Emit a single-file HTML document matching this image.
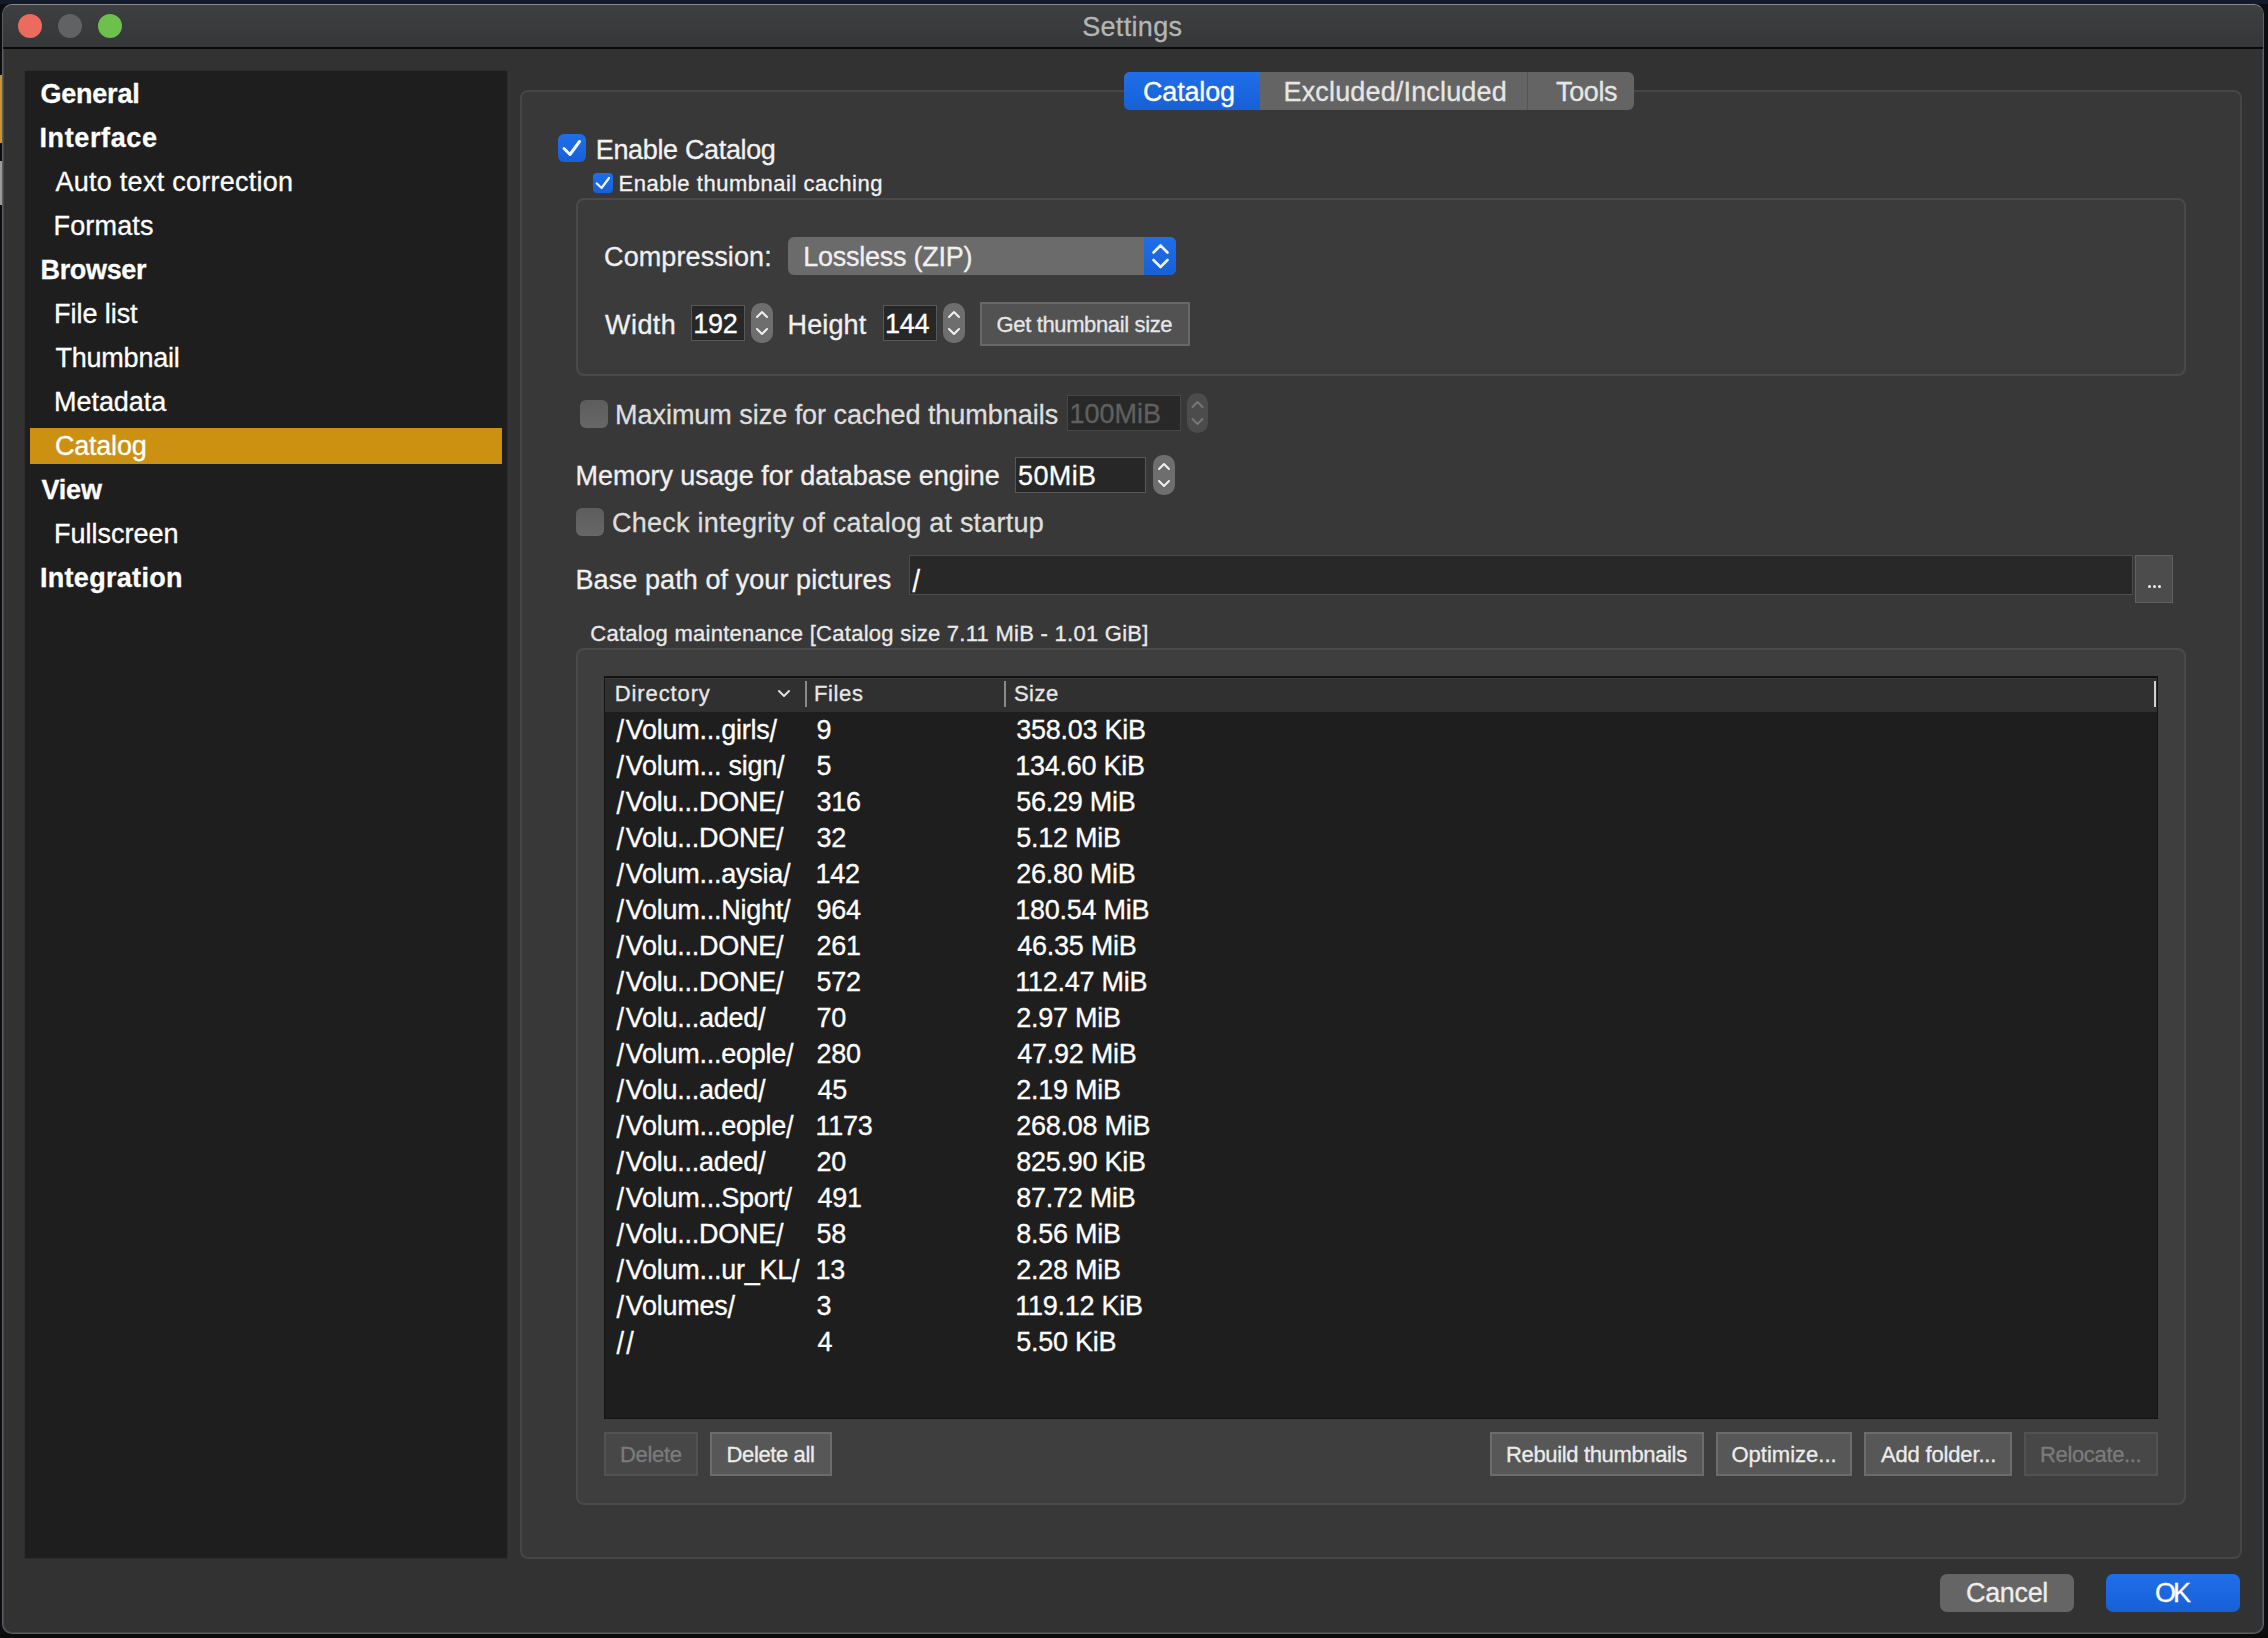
<!DOCTYPE html>
<html><head><meta charset="utf-8"><title>Settings</title>
<style>
html,body{margin:0;padding:0;width:2268px;height:1638px;overflow:hidden;background:#0b0d12;}
body{position:relative;font-family:"Liberation Sans",sans-serif;}
.a{position:absolute;box-sizing:border-box;}
.sl{display:inline-block;transform:translateY(2px) scaleY(1.15)}.sl1{margin-right:2px}
.t{position:absolute;white-space:nowrap;font-family:"Liberation Sans",sans-serif;}
</style></head><body>
<!-- desktop -->
<div class="a" style="left:0;top:0;width:2268px;height:4px;background:#131a2b"></div>
<div class="a" style="left:0;top:1634px;width:2268px;height:4px;background:#0a0a0a"></div>
<div class="a" style="left:0;top:75px;width:1.5px;height:68px;background:#c8962a"></div>
<div class="a" style="left:0;top:161px;width:1.5px;height:44px;background:#9a9a9a"></div>
<!-- window -->
<div class="a" style="left:2px;top:4px;width:2262px;height:1630px;border-radius:10px;background:#323232;border:1px solid #5f5f5f;border-top-color:#8c8c8c;box-shadow:inset 1px 0 0 #474747,inset -1px 0 0 #474747,inset 0 -1px 0 #474747;overflow:hidden">
  <div class="a" style="left:0;top:0;width:100%;height:42px;background:linear-gradient(#3e3f41,#363739)"></div>
  <div class="a" style="left:0;top:42px;width:100%;height:1.5px;background:#0a0a0a"></div>
</div>
<!-- traffic lights -->
<div class="a" style="left:18px;top:14px;width:24px;height:24px;border-radius:50%;background:#ed6a5e"></div>
<div class="a" style="left:58px;top:14px;width:24px;height:24px;border-radius:50%;background:#616264"></div>
<div class="a" style="left:98px;top:14px;width:24px;height:24px;border-radius:50%;background:#6dc04b"></div>
<!-- sidebar -->
<div class="a" style="left:24px;top:70px;width:484px;height:1489px;background:#1e1e1e;border:1px solid #2d2d2d"></div>
<div class="a" style="left:30px;top:428px;width:472px;height:36px;background:#cd9112"></div>
<!-- outer frame -->
<div class="a" style="left:520px;top:90px;width:1722px;height:1469px;border-radius:8px;background:#383838;border:2px solid #464646"></div>
<!-- tabs -->
<div class="a" style="left:1124px;top:72px;width:510px;height:38px;border-radius:6px;background:#646464;overflow:hidden">
  <div class="a" style="left:0;top:0;width:136px;height:38px;background:linear-gradient(#1f6fea,#1760d6)"></div>
  <div class="a" style="left:403px;top:0;width:1px;height:38px;background:#555"></div>
</div>
<!-- enable catalog checkbox -->
<div class="a" style="left:558px;top:134px;width:28px;height:28px;border-radius:6px;background:linear-gradient(#1f6fea,#1760d6)"></div>
<svg class="a" style="left:558px;top:134px" width="28" height="28"><path d="M6 14.5 L12 20.5 L21.5 7.5" fill="none" stroke="#f2f6ff" stroke-width="3" stroke-linecap="round" stroke-linejoin="round"/></svg>
<div class="a" style="left:593px;top:173px;width:20px;height:20px;border-radius:4px;background:linear-gradient(#1f6fea,#1760d6)"></div>
<svg class="a" style="left:593px;top:173px" width="20" height="20"><path d="M3.8 10.5 L8.6 15 L16 5" fill="none" stroke="#f2f6ff" stroke-width="2.2" stroke-linecap="round" stroke-linejoin="round"/></svg>
<!-- inner group -->
<div class="a" style="left:576px;top:198px;width:1610px;height:178px;border-radius:8px;background:#3b3b3b;border:2px solid #4a4a4a"></div>
<!-- combo -->
<div class="a" style="left:788px;top:237px;width:388px;height:38px;border-radius:6px;background:#6b6b6b;overflow:hidden">
  <div class="a" style="right:0;top:0;width:32px;height:38px;background:linear-gradient(#1f6fea,#1760d6)"></div>
</div>
<svg class="a" style="left:1144px;top:237px" width="32" height="38"><path d="M9.5 15.5 L16.5 8.5 L23.5 15.5 M9.5 23 L16.5 30 L23.5 23" fill="none" stroke="#eef3ff" stroke-width="2.6" stroke-linecap="round" stroke-linejoin="round"/></svg>
<!-- width field -->
<div class="a" style="left:691px;top:305px;width:54px;height:36px;background:#272727;border:1px solid #585858"></div>
<div class="a" style="left:751px;top:303px;width:22px;height:40px;border-radius:10px;background:#6e6e6e"></div>
<svg class="a" style="left:751px;top:303px" width="22" height="40"><path d="M6 14 L11 9 L16 14 M6 26 L11 31 L16 26" fill="none" stroke="#f0f0f0" stroke-width="2" stroke-linecap="round" stroke-linejoin="round"/></svg>
<div class="a" style="left:883px;top:305px;width:54px;height:36px;background:#272727;border:1px solid #585858"></div>
<div class="a" style="left:943px;top:303px;width:22px;height:40px;border-radius:10px;background:#6e6e6e"></div>
<svg class="a" style="left:943px;top:303px" width="22" height="40"><path d="M6 14 L11 9 L16 14 M6 26 L11 31 L16 26" fill="none" stroke="#f0f0f0" stroke-width="2" stroke-linecap="round" stroke-linejoin="round"/></svg>
<div class="a" style="left:980px;top:302px;width:210px;height:44px;background:#525252;border:2px solid #686868"></div>
<!-- max size -->
<div class="a" style="left:580px;top:400px;width:28px;height:28px;border-radius:6px;background:linear-gradient(#5d5d5d,#676767)"></div>
<div class="a" style="left:1067px;top:395px;width:114px;height:36px;background:#282828;border:1px solid #474747"></div>
<div class="a" style="left:1187px;top:393px;width:21px;height:40px;border-radius:10px;background:#4c4c4c"></div>
<svg class="a" style="left:1187px;top:393px" width="21" height="40"><path d="M5.5 14 L10.5 9 L15.5 14 M5.5 26 L10.5 31 L15.5 26" fill="none" stroke="#777" stroke-width="2" stroke-linecap="round" stroke-linejoin="round"/></svg>
<!-- memory -->
<div class="a" style="left:1015px;top:457px;width:131px;height:36px;background:#272727;border:1px solid #585858"></div>
<div class="a" style="left:1153px;top:455px;width:22px;height:40px;border-radius:10px;background:#6e6e6e"></div>
<svg class="a" style="left:1153px;top:455px" width="22" height="40"><path d="M6 14 L11 9 L16 14 M6 26 L11 31 L16 26" fill="none" stroke="#f0f0f0" stroke-width="2" stroke-linecap="round" stroke-linejoin="round"/></svg>
<div class="a" style="left:576px;top:508px;width:28px;height:28px;border-radius:6px;background:linear-gradient(#5d5d5d,#676767)"></div>
<!-- base path -->
<div class="a" style="left:909px;top:555px;width:1224px;height:40px;background:#282828;border:1px solid #4c4c4c"></div>
<div class="a" style="left:2135px;top:555px;width:38px;height:48px;background:#4c4c4c;border:1px solid #606060"></div>
<div class="a" style="left:2148px;top:585px;width:3px;height:3px;border-radius:50%;background:#eee"></div>
<div class="a" style="left:2153px;top:585px;width:3px;height:3px;border-radius:50%;background:#eee"></div>
<div class="a" style="left:2158px;top:585px;width:3px;height:3px;border-radius:50%;background:#eee"></div>
<!-- maintenance group -->
<div class="a" style="left:576px;top:648px;width:1610px;height:857px;border-radius:8px;background:#3e3e3e;border:2px solid #4a4a4a"></div>
<!-- table -->
<div class="a" style="left:604px;top:676px;width:1554px;height:743px;background:#1e1e1e;border:1px solid #141414;border-top:2px solid #121212"></div>
<div class="a" style="left:605px;top:678px;width:1552px;height:34px;background:#303030;border-top:1px solid #3a3a3a"></div>
<div class="a" style="left:805px;top:681px;width:2px;height:26px;background:#8a8a8a"></div>
<div class="a" style="left:1004px;top:681px;width:2px;height:26px;background:#8a8a8a"></div>
<div class="a" style="left:2154px;top:681px;width:2px;height:26px;background:#d0d0d0"></div>
<svg class="a" style="left:776px;top:687px" width="16" height="12"><path d="M3 4 L8 9 L13 4" fill="none" stroke="#e0e0e0" stroke-width="2" stroke-linecap="round" stroke-linejoin="round"/></svg>
<!-- buttons -->
<div class="a" style="left:604px;top:1432px;width:94px;height:44px;background:#474747;border:2px solid #525252"></div>
<div class="a" style="left:710px;top:1432px;width:122px;height:44px;background:#575757;border:2px solid #6c6c6c"></div>
<div class="a" style="left:1490px;top:1432px;width:214px;height:44px;background:#575757;border:2px solid #6c6c6c"></div>
<div class="a" style="left:1716px;top:1432px;width:136px;height:44px;background:#575757;border:2px solid #6c6c6c"></div>
<div class="a" style="left:1864px;top:1432px;width:148px;height:44px;background:#575757;border:2px solid #6c6c6c"></div>
<div class="a" style="left:2024px;top:1432px;width:134px;height:44px;background:#474747;border:2px solid #525252"></div>
<!-- dialog buttons -->
<div class="a" style="left:1940px;top:1574px;width:134px;height:38px;border-radius:7px;background:#656565"></div>
<div class="a" style="left:2106px;top:1574px;width:134px;height:38px;border-radius:7px;background:linear-gradient(#1f6fea,#1760d6)"></div>

<div class="t" style="left:1082.2px;top:14.0px;font-size:27px;line-height:27px;color:#b5b5b5;-webkit-text-stroke:0.3px #b5b5b5;letter-spacing:0.33px;">Settings</div>
<div class="t" style="left:40.5px;top:81.0px;font-size:27px;line-height:27px;font-weight:700;color:#ffffff;-webkit-text-stroke:0.3px #ffffff;letter-spacing:-0.23px;">General</div>
<div class="t" style="left:39.5px;top:125.0px;font-size:27px;line-height:27px;font-weight:700;color:#ffffff;-webkit-text-stroke:0.3px #ffffff;letter-spacing:0.62px;">Interface</div>
<div class="t" style="left:55.5px;top:169.0px;font-size:27px;line-height:27px;color:#ffffff;-webkit-text-stroke:0.3px #ffffff;letter-spacing:0.26px;">Auto text correction</div>
<div class="t" style="left:53.5px;top:213.0px;font-size:27px;line-height:27px;color:#ffffff;-webkit-text-stroke:0.3px #ffffff;letter-spacing:0.17px;">Formats</div>
<div class="t" style="left:40.5px;top:257.0px;font-size:27px;line-height:27px;font-weight:700;color:#ffffff;-webkit-text-stroke:0.3px #ffffff;letter-spacing:-0.33px;">Browser</div>
<div class="t" style="left:54.1px;top:301.0px;font-size:27px;line-height:27px;color:#ffffff;-webkit-text-stroke:0.3px #ffffff;letter-spacing:-0.06px;">File list</div>
<div class="t" style="left:55.6px;top:345.0px;font-size:27px;line-height:27px;color:#ffffff;-webkit-text-stroke:0.3px #ffffff;letter-spacing:-0.25px;">Thumbnail</div>
<div class="t" style="left:54.0px;top:389.0px;font-size:27px;line-height:27px;color:#ffffff;-webkit-text-stroke:0.3px #ffffff;letter-spacing:-0.04px;">Metadata</div>
<div class="t" style="left:54.9px;top:433.0px;font-size:27px;line-height:27px;color:#ffffff;-webkit-text-stroke:0.3px #ffffff;letter-spacing:-0.20px;">Catalog</div>
<div class="t" style="left:41.4px;top:477.0px;font-size:27px;line-height:27px;font-weight:700;color:#ffffff;-webkit-text-stroke:0.3px #ffffff;letter-spacing:-0.17px;">View</div>
<div class="t" style="left:53.9px;top:521.0px;font-size:27px;line-height:27px;color:#ffffff;-webkit-text-stroke:0.3px #ffffff;letter-spacing:0.01px;">Fullscreen</div>
<div class="t" style="left:39.9px;top:565.0px;font-size:27px;line-height:27px;font-weight:700;color:#ffffff;-webkit-text-stroke:0.3px #ffffff;letter-spacing:0.31px;">Integration</div>
<div class="t" style="left:1143.0px;top:79.0px;font-size:27px;line-height:27px;color:#ffffff;-webkit-text-stroke:0.3px #ffffff;letter-spacing:-0.17px;">Catalog</div>
<div class="t" style="left:1283.5px;top:79.0px;font-size:27px;line-height:27px;color:#e6e6e6;-webkit-text-stroke:0.3px #e6e6e6;letter-spacing:0.16px;">Excluded/Included</div>
<div class="t" style="left:1556.1px;top:79.0px;font-size:27px;line-height:27px;color:#e6e6e6;-webkit-text-stroke:0.3px #e6e6e6;letter-spacing:-0.40px;">Tools</div>
<div class="t" style="left:595.8px;top:137.0px;font-size:27px;line-height:27px;color:#f2f2f2;-webkit-text-stroke:0.3px #f2f2f2;letter-spacing:-0.35px;">Enable Catalog</div>
<div class="t" style="left:618.5px;top:173.0px;font-size:22px;line-height:22px;color:#f2f2f2;-webkit-text-stroke:0.3px #f2f2f2;letter-spacing:0.52px;">Enable thumbnail caching</div>
<div class="t" style="left:604.1px;top:244.0px;font-size:27px;line-height:27px;color:#f0f0f0;-webkit-text-stroke:0.3px #f0f0f0;letter-spacing:0.09px;">Compression:</div>
<div class="t" style="left:803.2px;top:244.0px;font-size:27px;line-height:27px;color:#f0f0f0;-webkit-text-stroke:0.3px #f0f0f0;letter-spacing:-0.25px;">Lossless (ZIP)</div>
<div class="t" style="left:605.1px;top:312.0px;font-size:27px;line-height:27px;color:#f0f0f0;-webkit-text-stroke:0.3px #f0f0f0;letter-spacing:0.42px;">Width</div>
<div class="t" style="left:693.3px;top:311.0px;font-size:27px;line-height:27px;color:#ffffff;-webkit-text-stroke:0.3px #ffffff;letter-spacing:-0.25px;">192</div>
<div class="t" style="left:787.5px;top:312.0px;font-size:27px;line-height:27px;color:#f0f0f0;-webkit-text-stroke:0.3px #f0f0f0;letter-spacing:0.14px;">Height</div>
<div class="t" style="left:885.0px;top:311.0px;font-size:27px;line-height:27px;color:#ffffff;-webkit-text-stroke:0.3px #ffffff;letter-spacing:-0.25px;">144</div>
<div class="t" style="left:996.5px;top:314.0px;font-size:22px;line-height:22px;color:#e6e6e6;-webkit-text-stroke:0.3px #e6e6e6;letter-spacing:-0.36px;">Get thumbnail size</div>
<div class="t" style="left:615.0px;top:402.0px;font-size:27px;line-height:27px;color:#dedede;-webkit-text-stroke:0.3px #dedede;letter-spacing:-0.03px;">Maximum size for cached thumbnails</div>
<div class="t" style="left:1069.5px;top:401.0px;font-size:27px;line-height:27px;color:#606060;-webkit-text-stroke:0.3px #606060;">100MiB</div>
<div class="t" style="left:575.5px;top:463.0px;font-size:27px;line-height:27px;color:#f0f0f0;-webkit-text-stroke:0.3px #f0f0f0;letter-spacing:-0.02px;">Memory usage for database engine</div>
<div class="t" style="left:1018.0px;top:463.0px;font-size:27px;line-height:27px;color:#ffffff;-webkit-text-stroke:0.3px #ffffff;letter-spacing:0.38px;">50MiB</div>
<div class="t" style="left:612.0px;top:510.0px;font-size:27px;line-height:27px;color:#dedede;-webkit-text-stroke:0.3px #dedede;letter-spacing:0.24px;">Check integrity of catalog at startup</div>
<div class="t" style="left:575.5px;top:567.0px;font-size:27px;line-height:27px;color:#f0f0f0;-webkit-text-stroke:0.3px #f0f0f0;letter-spacing:0.08px;">Base path of your pictures</div>
<div class="t" style="left:912.5px;top:567.0px;font-size:27px;line-height:27px;color:#ffffff;-webkit-text-stroke:0.3px #ffffff;"><span class="sl">/</span></div>
<div class="t" style="left:590.3px;top:623.0px;font-size:22px;line-height:22px;color:#eaeaea;-webkit-text-stroke:0.3px #eaeaea;letter-spacing:0.27px;">Catalog maintenance [Catalog size 7.11 MiB - 1.01 GiB]</div>
<div class="t" style="left:614.8px;top:683.0px;font-size:22px;line-height:22px;color:#e8e8e8;-webkit-text-stroke:0.3px #e8e8e8;letter-spacing:0.88px;">Directory</div>
<div class="t" style="left:813.9px;top:683.0px;font-size:22px;line-height:22px;color:#e8e8e8;-webkit-text-stroke:0.3px #e8e8e8;letter-spacing:0.65px;">Files</div>
<div class="t" style="left:1013.9px;top:683.0px;font-size:22px;line-height:22px;color:#e8e8e8;-webkit-text-stroke:0.3px #e8e8e8;letter-spacing:0.53px;">Size</div>
<div class="t" style="left:616.4px;top:717.0px;font-size:27px;line-height:27px;color:#ffffff;-webkit-text-stroke:0.3px #ffffff;letter-spacing:-0.25px;"><span class="sl sl1">/</span>Volum...girls<span class="sl">/</span></div>
<div class="t" style="left:816.5px;top:717.0px;font-size:27px;line-height:27px;color:#ffffff;-webkit-text-stroke:0.3px #ffffff;letter-spacing:-0.25px;">9</div>
<div class="t" style="left:1016.2px;top:717.0px;font-size:27px;line-height:27px;color:#ffffff;-webkit-text-stroke:0.3px #ffffff;letter-spacing:-0.25px;">358.03 KiB</div>
<div class="t" style="left:616.4px;top:753.0px;font-size:27px;line-height:27px;color:#ffffff;-webkit-text-stroke:0.3px #ffffff;letter-spacing:-0.25px;"><span class="sl sl1">/</span>Volum... sign<span class="sl">/</span></div>
<div class="t" style="left:816.5px;top:753.0px;font-size:27px;line-height:27px;color:#ffffff;-webkit-text-stroke:0.3px #ffffff;letter-spacing:-0.25px;">5</div>
<div class="t" style="left:1015.2px;top:753.0px;font-size:27px;line-height:27px;color:#ffffff;-webkit-text-stroke:0.3px #ffffff;letter-spacing:-0.25px;">134.60 KiB</div>
<div class="t" style="left:616.4px;top:789.0px;font-size:27px;line-height:27px;color:#ffffff;-webkit-text-stroke:0.3px #ffffff;letter-spacing:-0.25px;"><span class="sl sl1">/</span>Volu...DONE<span class="sl">/</span></div>
<div class="t" style="left:816.5px;top:789.0px;font-size:27px;line-height:27px;color:#ffffff;-webkit-text-stroke:0.3px #ffffff;letter-spacing:-0.25px;">316</div>
<div class="t" style="left:1016.2px;top:789.0px;font-size:27px;line-height:27px;color:#ffffff;-webkit-text-stroke:0.3px #ffffff;letter-spacing:-0.25px;">56.29 MiB</div>
<div class="t" style="left:616.4px;top:825.0px;font-size:27px;line-height:27px;color:#ffffff;-webkit-text-stroke:0.3px #ffffff;letter-spacing:-0.25px;"><span class="sl sl1">/</span>Volu...DONE<span class="sl">/</span></div>
<div class="t" style="left:816.5px;top:825.0px;font-size:27px;line-height:27px;color:#ffffff;-webkit-text-stroke:0.3px #ffffff;letter-spacing:-0.25px;">32</div>
<div class="t" style="left:1016.2px;top:825.0px;font-size:27px;line-height:27px;color:#ffffff;-webkit-text-stroke:0.3px #ffffff;letter-spacing:-0.25px;">5.12 MiB</div>
<div class="t" style="left:616.4px;top:861.0px;font-size:27px;line-height:27px;color:#ffffff;-webkit-text-stroke:0.3px #ffffff;letter-spacing:-0.25px;"><span class="sl sl1">/</span>Volum...aysia<span class="sl">/</span></div>
<div class="t" style="left:815.5px;top:861.0px;font-size:27px;line-height:27px;color:#ffffff;-webkit-text-stroke:0.3px #ffffff;letter-spacing:-0.25px;">142</div>
<div class="t" style="left:1016.2px;top:861.0px;font-size:27px;line-height:27px;color:#ffffff;-webkit-text-stroke:0.3px #ffffff;letter-spacing:-0.25px;">26.80 MiB</div>
<div class="t" style="left:616.4px;top:897.0px;font-size:27px;line-height:27px;color:#ffffff;-webkit-text-stroke:0.3px #ffffff;letter-spacing:-0.25px;"><span class="sl sl1">/</span>Volum...Night<span class="sl">/</span></div>
<div class="t" style="left:816.5px;top:897.0px;font-size:27px;line-height:27px;color:#ffffff;-webkit-text-stroke:0.3px #ffffff;letter-spacing:-0.25px;">964</div>
<div class="t" style="left:1015.2px;top:897.0px;font-size:27px;line-height:27px;color:#ffffff;-webkit-text-stroke:0.3px #ffffff;letter-spacing:-0.25px;">180.54 MiB</div>
<div class="t" style="left:616.4px;top:933.0px;font-size:27px;line-height:27px;color:#ffffff;-webkit-text-stroke:0.3px #ffffff;letter-spacing:-0.25px;"><span class="sl sl1">/</span>Volu...DONE<span class="sl">/</span></div>
<div class="t" style="left:816.5px;top:933.0px;font-size:27px;line-height:27px;color:#ffffff;-webkit-text-stroke:0.3px #ffffff;letter-spacing:-0.25px;">261</div>
<div class="t" style="left:1017.2px;top:933.0px;font-size:27px;line-height:27px;color:#ffffff;-webkit-text-stroke:0.3px #ffffff;letter-spacing:-0.25px;">46.35 MiB</div>
<div class="t" style="left:616.4px;top:969.0px;font-size:27px;line-height:27px;color:#ffffff;-webkit-text-stroke:0.3px #ffffff;letter-spacing:-0.25px;"><span class="sl sl1">/</span>Volu...DONE<span class="sl">/</span></div>
<div class="t" style="left:816.5px;top:969.0px;font-size:27px;line-height:27px;color:#ffffff;-webkit-text-stroke:0.3px #ffffff;letter-spacing:-0.25px;">572</div>
<div class="t" style="left:1015.2px;top:969.0px;font-size:27px;line-height:27px;color:#ffffff;-webkit-text-stroke:0.3px #ffffff;letter-spacing:-0.25px;">112.47 MiB</div>
<div class="t" style="left:616.4px;top:1005.0px;font-size:27px;line-height:27px;color:#ffffff;-webkit-text-stroke:0.3px #ffffff;letter-spacing:-0.25px;"><span class="sl sl1">/</span>Volu...aded<span class="sl">/</span></div>
<div class="t" style="left:816.5px;top:1005.0px;font-size:27px;line-height:27px;color:#ffffff;-webkit-text-stroke:0.3px #ffffff;letter-spacing:-0.25px;">70</div>
<div class="t" style="left:1016.2px;top:1005.0px;font-size:27px;line-height:27px;color:#ffffff;-webkit-text-stroke:0.3px #ffffff;letter-spacing:-0.25px;">2.97 MiB</div>
<div class="t" style="left:616.4px;top:1041.0px;font-size:27px;line-height:27px;color:#ffffff;-webkit-text-stroke:0.3px #ffffff;letter-spacing:-0.25px;"><span class="sl sl1">/</span>Volum...eople<span class="sl">/</span></div>
<div class="t" style="left:816.5px;top:1041.0px;font-size:27px;line-height:27px;color:#ffffff;-webkit-text-stroke:0.3px #ffffff;letter-spacing:-0.25px;">280</div>
<div class="t" style="left:1017.2px;top:1041.0px;font-size:27px;line-height:27px;color:#ffffff;-webkit-text-stroke:0.3px #ffffff;letter-spacing:-0.25px;">47.92 MiB</div>
<div class="t" style="left:616.4px;top:1077.0px;font-size:27px;line-height:27px;color:#ffffff;-webkit-text-stroke:0.3px #ffffff;letter-spacing:-0.25px;"><span class="sl sl1">/</span>Volu...aded<span class="sl">/</span></div>
<div class="t" style="left:817.5px;top:1077.0px;font-size:27px;line-height:27px;color:#ffffff;-webkit-text-stroke:0.3px #ffffff;letter-spacing:-0.25px;">45</div>
<div class="t" style="left:1016.2px;top:1077.0px;font-size:27px;line-height:27px;color:#ffffff;-webkit-text-stroke:0.3px #ffffff;letter-spacing:-0.25px;">2.19 MiB</div>
<div class="t" style="left:616.4px;top:1113.0px;font-size:27px;line-height:27px;color:#ffffff;-webkit-text-stroke:0.3px #ffffff;letter-spacing:-0.25px;"><span class="sl sl1">/</span>Volum...eople<span class="sl">/</span></div>
<div class="t" style="left:815.5px;top:1113.0px;font-size:27px;line-height:27px;color:#ffffff;-webkit-text-stroke:0.3px #ffffff;letter-spacing:-0.25px;">1173</div>
<div class="t" style="left:1016.2px;top:1113.0px;font-size:27px;line-height:27px;color:#ffffff;-webkit-text-stroke:0.3px #ffffff;letter-spacing:-0.25px;">268.08 MiB</div>
<div class="t" style="left:616.4px;top:1149.0px;font-size:27px;line-height:27px;color:#ffffff;-webkit-text-stroke:0.3px #ffffff;letter-spacing:-0.25px;"><span class="sl sl1">/</span>Volu...aded<span class="sl">/</span></div>
<div class="t" style="left:816.5px;top:1149.0px;font-size:27px;line-height:27px;color:#ffffff;-webkit-text-stroke:0.3px #ffffff;letter-spacing:-0.25px;">20</div>
<div class="t" style="left:1016.2px;top:1149.0px;font-size:27px;line-height:27px;color:#ffffff;-webkit-text-stroke:0.3px #ffffff;letter-spacing:-0.25px;">825.90 KiB</div>
<div class="t" style="left:616.4px;top:1185.0px;font-size:27px;line-height:27px;color:#ffffff;-webkit-text-stroke:0.3px #ffffff;letter-spacing:-0.25px;"><span class="sl sl1">/</span>Volum...Sport<span class="sl">/</span></div>
<div class="t" style="left:817.5px;top:1185.0px;font-size:27px;line-height:27px;color:#ffffff;-webkit-text-stroke:0.3px #ffffff;letter-spacing:-0.25px;">491</div>
<div class="t" style="left:1016.2px;top:1185.0px;font-size:27px;line-height:27px;color:#ffffff;-webkit-text-stroke:0.3px #ffffff;letter-spacing:-0.25px;">87.72 MiB</div>
<div class="t" style="left:616.4px;top:1221.0px;font-size:27px;line-height:27px;color:#ffffff;-webkit-text-stroke:0.3px #ffffff;letter-spacing:-0.25px;"><span class="sl sl1">/</span>Volu...DONE<span class="sl">/</span></div>
<div class="t" style="left:816.5px;top:1221.0px;font-size:27px;line-height:27px;color:#ffffff;-webkit-text-stroke:0.3px #ffffff;letter-spacing:-0.25px;">58</div>
<div class="t" style="left:1016.2px;top:1221.0px;font-size:27px;line-height:27px;color:#ffffff;-webkit-text-stroke:0.3px #ffffff;letter-spacing:-0.25px;">8.56 MiB</div>
<div class="t" style="left:616.4px;top:1257.0px;font-size:27px;line-height:27px;color:#ffffff;-webkit-text-stroke:0.3px #ffffff;letter-spacing:-0.25px;"><span class="sl sl1">/</span>Volum...ur_KL<span class="sl">/</span></div>
<div class="t" style="left:815.5px;top:1257.0px;font-size:27px;line-height:27px;color:#ffffff;-webkit-text-stroke:0.3px #ffffff;letter-spacing:-0.25px;">13</div>
<div class="t" style="left:1016.2px;top:1257.0px;font-size:27px;line-height:27px;color:#ffffff;-webkit-text-stroke:0.3px #ffffff;letter-spacing:-0.25px;">2.28 MiB</div>
<div class="t" style="left:616.4px;top:1293.0px;font-size:27px;line-height:27px;color:#ffffff;-webkit-text-stroke:0.3px #ffffff;letter-spacing:-0.25px;"><span class="sl sl1">/</span>Volumes<span class="sl">/</span></div>
<div class="t" style="left:816.5px;top:1293.0px;font-size:27px;line-height:27px;color:#ffffff;-webkit-text-stroke:0.3px #ffffff;letter-spacing:-0.25px;">3</div>
<div class="t" style="left:1015.2px;top:1293.0px;font-size:27px;line-height:27px;color:#ffffff;-webkit-text-stroke:0.3px #ffffff;letter-spacing:-0.25px;">119.12 KiB</div>
<div class="t" style="left:616.4px;top:1329.0px;font-size:27px;line-height:27px;color:#ffffff;-webkit-text-stroke:0.3px #ffffff;letter-spacing:2.40px;"><span class="sl">/</span><span class="sl">/</span></div>
<div class="t" style="left:817.5px;top:1329.0px;font-size:27px;line-height:27px;color:#ffffff;-webkit-text-stroke:0.3px #ffffff;letter-spacing:-0.25px;">4</div>
<div class="t" style="left:1016.2px;top:1329.0px;font-size:27px;line-height:27px;color:#ffffff;-webkit-text-stroke:0.3px #ffffff;letter-spacing:-0.25px;">5.50 KiB</div>
<div class="t" style="left:620.0px;top:1444.0px;font-size:22px;line-height:22px;color:#7b7b7b;-webkit-text-stroke:0.3px #7b7b7b;letter-spacing:-0.30px;">Delete</div>
<div class="t" style="left:726.5px;top:1444.0px;font-size:22px;line-height:22px;color:#ececec;-webkit-text-stroke:0.3px #ececec;letter-spacing:-0.37px;">Delete all</div>
<div class="t" style="left:1506.0px;top:1444.0px;font-size:22px;line-height:22px;color:#ececec;-webkit-text-stroke:0.3px #ececec;letter-spacing:-0.35px;">Rebuild thumbnails</div>
<div class="t" style="left:1731.5px;top:1444.0px;font-size:22px;line-height:22px;color:#ececec;-webkit-text-stroke:0.3px #ececec;">Optimize...</div>
<div class="t" style="left:1881.0px;top:1444.0px;font-size:22px;line-height:22px;color:#ececec;-webkit-text-stroke:0.3px #ececec;letter-spacing:-0.17px;">Add folder...</div>
<div class="t" style="left:2040.0px;top:1444.0px;font-size:22px;line-height:22px;color:#7b7b7b;-webkit-text-stroke:0.3px #7b7b7b;letter-spacing:-0.35px;">Relocate...</div>
<div class="t" style="left:1966.0px;top:1580.0px;font-size:27px;line-height:27px;color:#eeeeee;-webkit-text-stroke:0.3px #eeeeee;letter-spacing:-0.34px;">Cancel</div>
<div class="t" style="left:2155.1px;top:1580.0px;font-size:27px;line-height:27px;color:#ffffff;-webkit-text-stroke:0.3px #ffffff;letter-spacing:-3.20px;">OK</div>
</body></html>
